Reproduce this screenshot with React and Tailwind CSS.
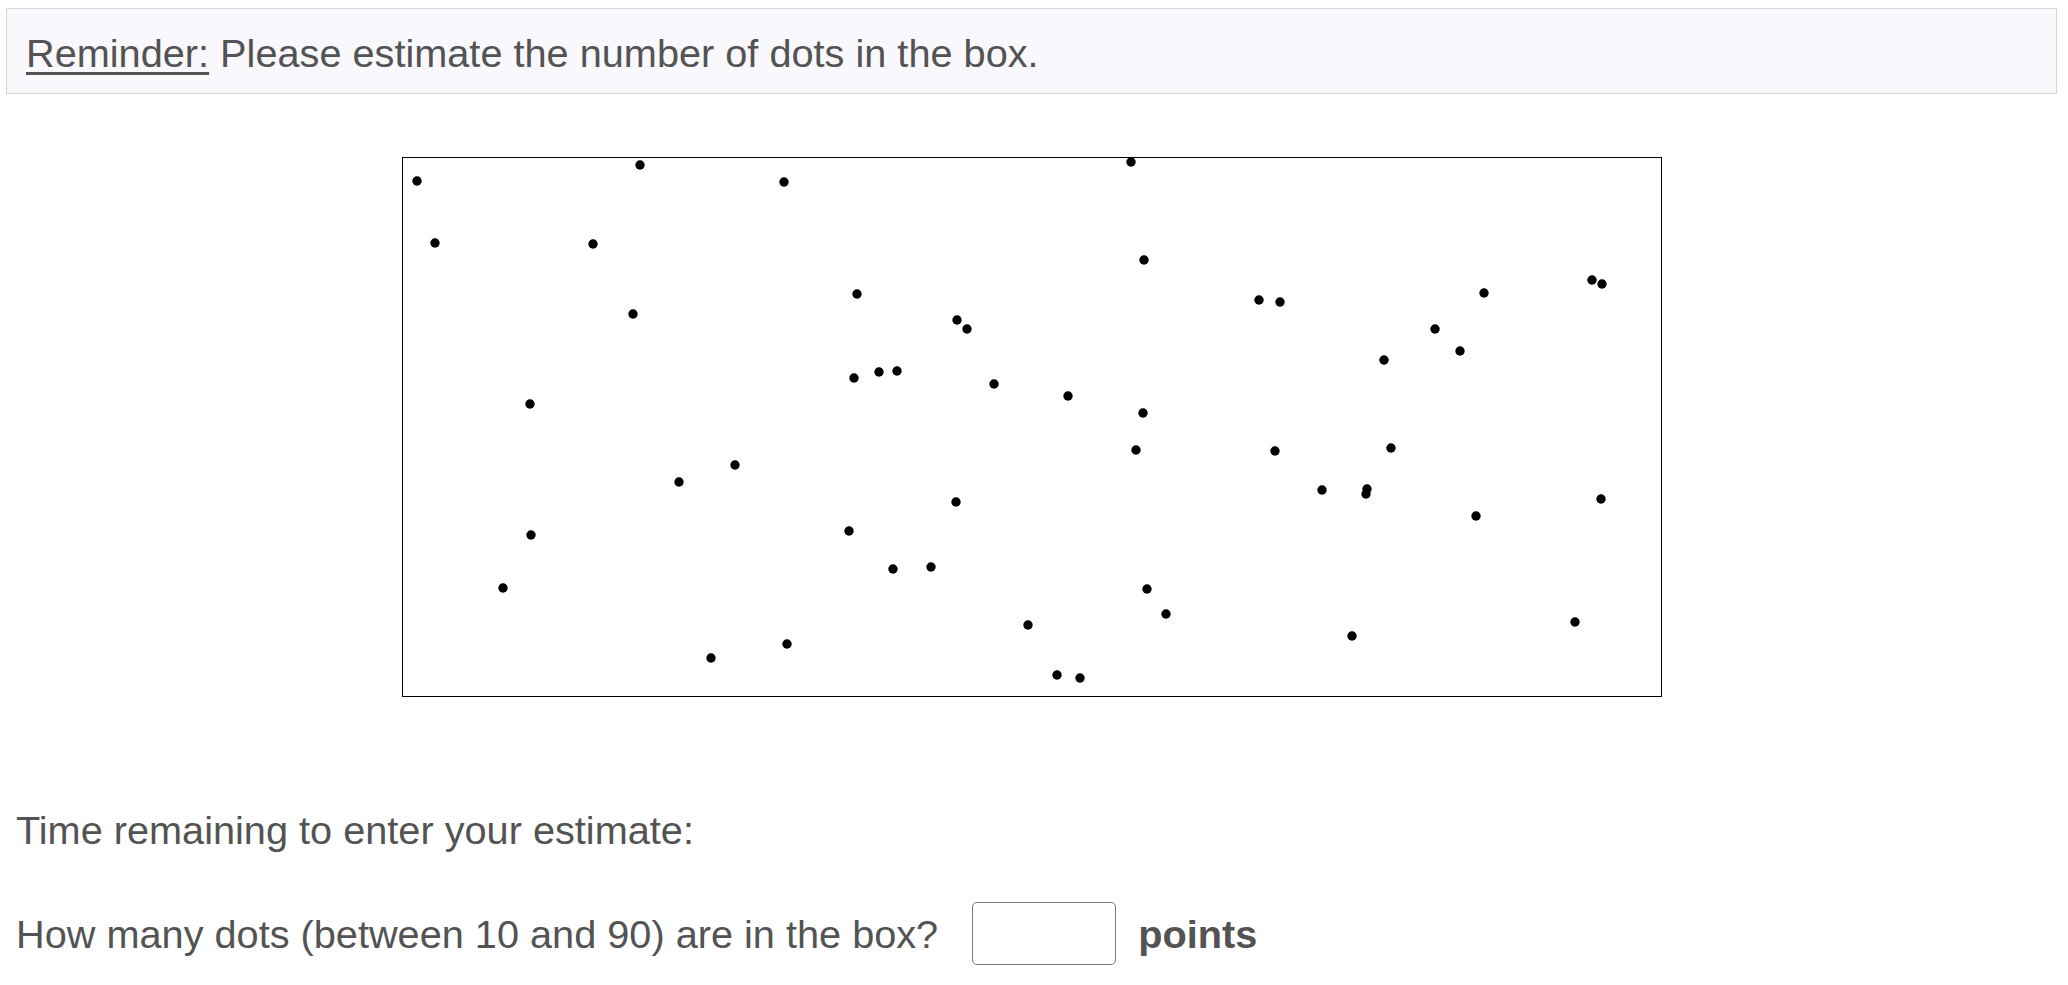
import React from "react";

// dot centres, relative to the box's top-left corner
const DOTS = [
  [417, 181], [640, 165], [784, 182], [1131, 162], [435, 243], [593, 244],
  [1144, 260], [857, 294], [633, 314], [1259, 300], [1280, 302], [1484, 293],
  [1592, 280], [1602, 284], [957, 320], [967, 329], [1435, 329], [1460, 351],
  [1384, 360], [854, 378], [879, 372], [897, 371], [994, 384], [1068, 396],
  [530, 404], [1143, 413], [1136, 450], [1275, 451], [1391, 448], [735, 465],
  [679, 482], [1322, 490], [1367, 489], [1366, 494], [956, 502], [1601, 499],
  [1476, 516], [531, 535], [849, 531], [893, 569], [931, 567], [503, 588],
  [1147, 589], [1166, 614], [1028, 625], [1575, 622], [1352, 636], [787, 644],
  [711, 658], [1057, 675], [1080, 678],
];

const BOX_X = 402;
const BOX_Y = 157;

function DotBox() {
  return (
    <div className="mx-auto w-[1260px] h-[540px] border border-black bg-white">
      <svg width="1258" height="538" viewBox="0 0 1258 538" className="block">
        {DOTS.map(([x, y], i) => (
          <circle key={i} cx={x - BOX_X - 1} cy={y - BOX_Y - 1} r="4.7" fill="#000" />
        ))}
      </svg>
    </div>
  );
}

export default function App() {
  return (
    <div className="min-h-screen bg-white text-[#535353] font-['Liberation_Sans',Arial,sans-serif] text-[39.7px]">
      <div className="ml-[6px] mr-[11px] pt-[8px]">
        <div className="h-[86px] border border-[#d6d6d6] bg-[#f8f8fd] flex items-center pl-[19px] pt-[3px]">
          <p className="leading-[46px]">
            <span className="underline underline-offset-[5px] decoration-[3px]">Reminder:</span> Please
            estimate the number of dots in the box.
          </p>
        </div>

        <div className="mt-[63px]">
          <DotBox />
        </div>
      </div>

      <div className="pl-[16px] mt-[110px]">
        <p className="leading-[46px]">Time remaining to enter your estimate:</p>
        <div className="mt-[49px] flex items-center h-[63px]">
          <label className="leading-[46px]">How many dots (between 10 and 90) are in the box?</label>
          <input
            type="text"
            className="ml-[34px] w-[144px] h-[63px] border border-[#7a7a7a] rounded-[5px] bg-white outline-none px-2 text-[32px]"
          />
          <span className="ml-[22px] leading-[46px] font-bold">points</span>
        </div>
      </div>
    </div>
  );
}
